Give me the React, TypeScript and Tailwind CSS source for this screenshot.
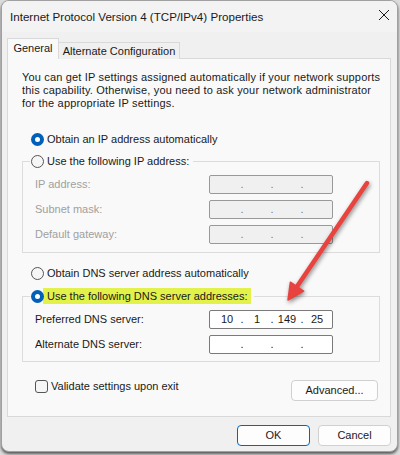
import { Fragment } from 'react'

function Radio({ checked }: { checked?: boolean }) {
  return checked ? (
    <span className="relative z-10 flex h-[13px] w-[13px] shrink-0 items-center justify-center rounded-full bg-[#005fb8]">
      <span className="h-[5px] w-[5px] rounded-full bg-white" />
    </span>
  ) : (
    <span className="h-[13px] w-[13px] shrink-0 rounded-full border border-[#555555] bg-[#f6f6f6]" />
  )
}

function IpField({ parts, disabled }: { parts?: string[]; disabled?: boolean }) {
  const p = parts ?? ['', '', '', '']
  return (
    <div
      className={`flex h-[19px] w-[124px] items-center rounded-[2px] border pl-[4px] ${
        disabled ? 'border-[#999999] bg-[#f0f0f0] text-[#7a7a7a]' : 'border-[#7a7a7a] bg-white text-[#1a1a1a]'
      }`}
    >
      {p.map((v, i) => (
        <Fragment key={i}>
          {i > 0 && <span className="w-[4px] text-center">.</span>}
          <span className="w-[26px] text-center">{v}</span>
        </Fragment>
      ))}
    </div>
  )
}

function FieldRow({ label, disabled, parts }: { label: string; disabled?: boolean; parts?: string[] }) {
  return (
    <div className="flex h-[19px] items-center">
      <span className={`w-[174px] ${disabled ? 'text-[#a0a0a0]' : ''}`}>{label}</span>
      <IpField disabled={disabled} parts={parts} />
    </div>
  )
}

export default function App() {
  return (
    <div className="relative h-[455px] w-[400px] overflow-hidden bg-[#dcdcdc] font-['Liberation_Sans',Arial,sans-serif] text-[11px] text-[#1a1a1a]">
      <div className="ml-[1px] flex h-[452px] w-[397px] flex-col overflow-hidden rounded-[8px] border border-[#a0a0a0] bg-[#f0f0f0] shadow-[0_2px_3px_rgba(0,0,0,0.6)]">
        {/* Title bar */}
        <div className="flex h-[31px] shrink-0 items-center justify-between bg-[#f3f3f3] pl-[8px] pr-[7px]">
          <span className="text-[11.6px]">Internet Protocol Version 4 (TCP/IPv4) Properties</span>
          <svg width="12" height="12" viewBox="0 0 12 12" className="mb-[3px]">
            <path d="M1 1L11 11M11 1L1 11" stroke="#1a1a1a" strokeWidth="1" />
          </svg>
        </div>

        <div className="flex flex-1 flex-col pl-[5px] pr-[6px] pt-[6px]">
          {/* Tabs */}
          <div className="relative z-10 -mb-px flex h-[21px] items-end">
            <div className="flex h-[21px] w-[52px] items-center justify-center border border-b-0 border-[#d9d9d9] bg-[#f9f9f9] pb-[1px]">
              General
            </div>
            <div className="flex h-[17px] w-[121px] items-center justify-center border border-b-0 border-l-0 border-[#d9d9d9] bg-[#f0f0f0]">
              Alternate Configuration
            </div>
          </div>

          {/* Panel */}
          <div className="flex h-[359px] w-full flex-col border border-[#d9d9d9] bg-[#f9f9f9] pl-[14px]">
            <p className="mt-[12px] whitespace-nowrap leading-[13px] tracking-[0.17px]">
              You can get IP settings assigned automatically if your network supports
              <br />
              this capability. Otherwise, you need to ask your network administrator
              <br />
              for the appropriate IP settings.
            </p>

            <div className="mt-[21px] flex h-[16px] items-center gap-[3px] pl-[9px]">
              <Radio checked />
              <span>Obtain an IP address automatically</span>
            </div>

            <fieldset className="mt-[6px] w-[358px] border border-[#dcdcdc] pb-[8px]">
              <legend className="ml-[7px] flex h-[16px] items-center gap-[3px] pl-[1px] pr-[4px]">
                <Radio />
                <span>Use the following IP address:</span>
              </legend>
              <div className="flex flex-col gap-[6px] pl-[12px] pt-[6px]">
                <FieldRow label="IP address:" disabled />
                <FieldRow label="Subnet mask:" disabled />
                <FieldRow label="Default gateway:" disabled />
              </div>
            </fieldset>

            <div className="mt-[12px] flex h-[16px] items-center gap-[3px] pl-[9px]">
              <Radio />
              <span>Obtain DNS server address automatically</span>
            </div>

            <fieldset className="mt-[7px] w-[358px] border border-[#dcdcdc] pb-[7px]">
              <legend className="ml-[7px] flex h-[16px] items-center pl-[1px] pr-[3px]">
                <Radio checked />
                <span className="-ml-[1px] bg-[#e3f14b] pl-[4px] pr-[3px] leading-[16px]">
                  Use the following DNS server addresses:
                </span>
              </legend>
              <div className="flex flex-col gap-[6px] pl-[12px] pt-[6px]">
                <FieldRow label="Preferred DNS server:" parts={['10', '1', '149', '25']} />
                <FieldRow label="Alternate DNS server:" />
              </div>
            </fieldset>

            <div className="mt-[16px] flex w-[358px] items-start justify-between">
              <div className="flex items-center gap-[3px] pl-[13px]">
                <span className="h-[13px] w-[13px] rounded-[3px] border border-[#555555] bg-[#f6f6f6]" />
                <span>Validate settings upon exit</span>
              </div>
              <button className="mr-[2px] mt-[2px] h-[21px] w-[87px] rounded-[4px] border border-[#d0d0d0] bg-[#fdfdfd]">
                Advanced...
              </button>
            </div>
          </div>

          {/* Dialog buttons */}
          <div className="mt-[8px] flex justify-end gap-[8px]">
            <button className="h-[21px] w-[73px] rounded-[4px] border border-[#0067c0] bg-[#fdfdfd]">OK</button>
            <button className="h-[21px] w-[73px] rounded-[4px] border border-[#d0d0d0] bg-[#fdfdfd]">Cancel</button>
          </div>
        </div>
      </div>

      {/* Annotation arrow */}
      <svg
        className="pointer-events-none absolute left-0 top-0 drop-shadow-[1px_2px_2px_rgba(0,0,0,0.45)]"
        width="400"
        height="455"
        viewBox="0 0 400 455"
      >
        <line x1="367" y1="183" x2="296" y2="288" stroke="#e8433f" strokeWidth="4.5" strokeLinecap="round" />
        <polygon points="288,300 290.4,282.2 303.6,291.2" fill="#e8433f" stroke="#e8433f" strokeWidth="1.5" strokeLinejoin="round" />
      </svg>
    </div>
  )
}
